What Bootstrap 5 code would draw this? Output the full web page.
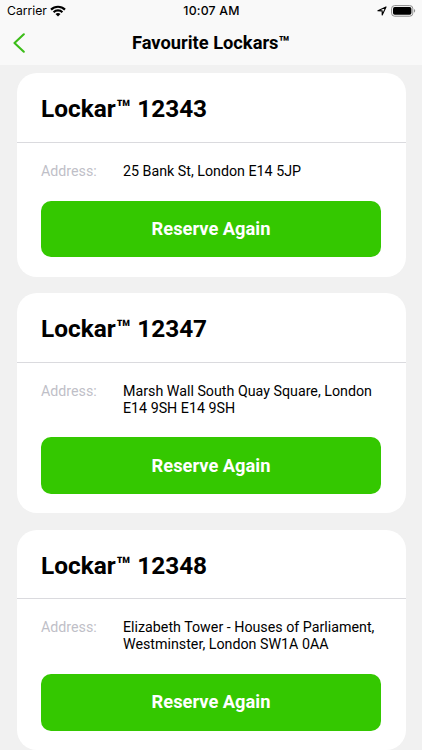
<!DOCTYPE html>
<html lang="en">
<head>
<meta charset="utf-8">
<meta name="viewport" content="width=device-width, initial-scale=1">
<title>Favourite Lockars</title>
<link href="https://cdn.jsdelivr.net/npm/bootstrap@5.3.0/dist/css/bootstrap.min.css" rel="stylesheet">
<style>
body { font-family: Roboto, sans-serif; background: #f1f1f1; color: #000; height: 750px; }
.app-header { background: #f9f9f9; height: 65px; }
.status-bar { height: 22px; font-family: Inter, sans-serif; font-size: 12.2px; line-height: 22px; display: grid; grid-template-columns: 1fr auto 1fr; padding: 0 6px 0 7px; }
.status-time { font-weight: 500; font-size: 12.3px; letter-spacing: .2px; }
.wifi-icon { margin-left: 3.5px; }
.title-bar { height: 42px; display: grid; grid-template-columns: 40px 1fr 40px; }
.title-bar h1 { font-size: 18.3px; line-height: 42px; }
.back-btn { padding: 0 0 0 13px; line-height: 0; }
.locker-list { padding: 8.45px 16.5px 0 16.5px; gap: 16.5px; }
.locker-card { --bs-card-border-width: 0; --bs-card-border-radius: 20px; --bs-card-inner-border-radius: 20px; --bs-card-bg: #fff; }
.locker-head { height: 69.7px; padding: 0 24.5px; border-bottom: 1px solid #dadade; }
.locker-head h2 { font-size: 24.4px; line-height: 71.4px; }
.locker-body { padding: 20px 24.5px 19.3px; }
.address-row { font-size: 14.25px; line-height: 16.9px; margin-bottom: 20.5px; }
.address-label { width: 82px; color: #bfbfc8; }
.reserve-btn { --bs-btn-bg: #34c800; --bs-btn-hover-bg: #2fb400; --bs-btn-active-bg: #2aa300; --bs-btn-color: #fff; --bs-btn-hover-color: #fff; --bs-btn-border-width: 0; --bs-btn-border-radius: 10px; height: 56.8px; font-size: 18.3px; }
</style>
<script src="https://cdn.jsdelivr.net/npm/bootstrap@5.3.0/dist/js/bootstrap.bundle.min.js"></script>
</head>
<body class="overflow-hidden">
<header class="app-header">
  <div class="status-bar">
    <div class="d-flex align-items-center">
      <span class="carrier">Carrier</span>
      <svg class="wifi-icon" width="16" height="12" viewBox="0 0 16 12" aria-hidden="true"><g fill="none" stroke="#000" stroke-width="2.2"><path d="M1 4.6a10 10 0 0 1 14 0"/><path d="M3.6 7.2a6.3 6.3 0 0 1 8.8 0"/></g><path d="M5.5 9.1a3.6 3.6 0 0 1 5 0L8 11.6z"/></svg>
    </div>
    <span class="status-time">10:07 AM</span>
    <div class="d-flex align-items-center justify-content-end">
      <svg class="me-1" width="10" height="10" viewBox="0 0 10 10" aria-hidden="true"><path d="M.9 4.8 9 .9 5.2 9V4.9z" fill="none" stroke="#000" stroke-width="1.1" stroke-linejoin="round"/></svg>
      <svg width="25" height="12" viewBox="0 0 25 12" aria-hidden="true"><rect x=".6" y=".6" width="21.2" height="10.6" rx="3" fill="none" stroke="#8c8c8c"/><rect x="2" y="2" width="18.4" height="7.8" rx="1.7"/><path d="M23 4.1v3.6c1.6-.6 1.6-3 0-3.6z" fill="#8c8c8c"/></svg>
    </div>
  </div>
  <nav class="title-bar" aria-label="Page">
    <button class="btn border-0 back-btn d-flex align-items-center" aria-label="Back">
      <svg width="12" height="20" viewBox="0 0 12 20"><path d="M10.8 1.3 1.5 10l9.3 8.7" fill="none" stroke="#3cbd19" stroke-width="2.1" stroke-linecap="round" stroke-linejoin="round"/></svg>
    </button>
    <h1 class="text-center fw-bold mb-0 text-nowrap">Favourite Lockars™</h1>
  </nav>
</header>
<main class="locker-list d-flex flex-column">
  <article class="card locker-card">
    <div class="locker-head"><h2 class="fw-bold mb-0">Lockar™ 12343</h2></div>
    <div class="locker-body">
      <div class="address-row d-flex"><span class="address-label flex-shrink-0">Address:</span><span>25 Bank St, London E14 5JP</span></div>
      <button class="btn reserve-btn w-100 fw-bold">Reserve Again</button>
    </div>
  </article>
  <article class="card locker-card">
    <div class="locker-head"><h2 class="fw-bold mb-0">Lockar™ 12347</h2></div>
    <div class="locker-body">
      <div class="address-row d-flex"><span class="address-label flex-shrink-0">Address:</span><span class="text-nowrap">Marsh Wall South Quay Square, London<br>E14 9SH E14 9SH</span></div>
      <button class="btn reserve-btn w-100 fw-bold">Reserve Again</button>
    </div>
  </article>
  <article class="card locker-card">
    <div class="locker-head"><h2 class="fw-bold mb-0">Lockar™ 12348</h2></div>
    <div class="locker-body">
      <div class="address-row d-flex"><span class="address-label flex-shrink-0">Address:</span><span class="text-nowrap">Elizabeth Tower - Houses of Parliament,<br>Westminster, London SW1A 0AA</span></div>
      <button class="btn reserve-btn w-100 fw-bold">Reserve Again</button>
    </div>
  </article>
</main>
</body>
</html>
